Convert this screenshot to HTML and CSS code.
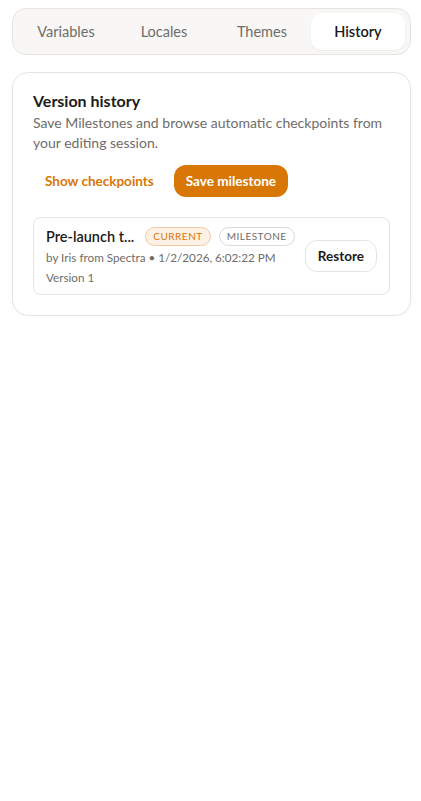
FILE: index.html
```html
<!DOCTYPE html>
<html lang="en">
<head>
  <meta charset="UTF-8">
  <title>Version history</title>
  <link rel="stylesheet" href="styles.css">
</head>
<body>

  <nav class="tabs">
    <button class="tab">Variables</button>
    <button class="tab">Locales</button>
    <button class="tab">Themes</button>
    <button class="tab active">History</button>
  </nav>

  <section class="card">
    <h2 class="card-title">Version history</h2>
    <p class="card-desc">Save Milestones and browse automatic checkpoints from your editing session.</p>

    <div class="actions">
      <button class="btn-link">Show checkpoints</button>
      <button class="btn-primary">Save milestone</button>
    </div>

    <div class="version">
      <div class="version-info">
        <div class="version-head">
          <span class="version-name">Pre-launch t...</span>
          <span class="badge badge-current">CURRENT</span>
          <span class="badge">MILESTONE</span>
        </div>
        <div class="version-meta">by Iris from Spectra • 1/2/2026, 6:02:22 PM</div>
        <div class="version-meta">Version 1</div>
      </div>
      <button class="btn-outline">Restore</button>
    </div>
  </section>

</body>
</html>
```

FILE: styles.css
```css
:root {
  --orange: #d97706;
  --border: #e6e4e1;
  --muted: #6f6c69;
}

body {
  margin: 0;
  padding: 8px 10px 0 12px;
  font-family: 'Lato', 'Open Sans', sans-serif;
  color: #1c1a18;
  background: #fff;
}

button {
  font-family: inherit;
  cursor: pointer;
}

.tabs {
  display: grid;
  grid-template-columns: 1fr 1fr 1fr 0.96fr;
  padding: 4px 5px 4px 4px;
  height: 47px;
  box-sizing: border-box;
  background: #f8f7f5;
  border: 1px solid var(--border);
  border-radius: 14px;
}

.tab {
  border: none;
  background: none;
  font-size: 14.5px;
  color: #6f6c69;
  border-radius: 11px;
}

.tab.active {
  background: #fff;
  color: #1c1a18;
  font-weight: 600;
  box-shadow: 0 1px 2px rgba(0, 0, 0, 0.04);
}

.card {
  margin-top: 17px;
  padding: 18px 20px 20px 20px;
  border: 1px solid var(--border);
  border-radius: 16px;
  box-shadow: 0 1px 3px rgba(0, 0, 0, 0.04);
}

.card-title {
  margin: 0;
  font-size: 16px;
  font-weight: 700;
  line-height: 20px;
}

.card-desc {
  margin: 2px 0 0;
  font-size: 14px;
  line-height: 20px;
  color: var(--muted);
}

.actions {
  display: flex;
  gap: 8px;
  margin-top: 12px;
}

.btn-link {
  border: none;
  background: none;
  color: var(--orange);
  font-size: 13.5px;
  font-weight: 700;
  padding: 0 12px;
  height: 32px;
}

.btn-primary {
  border: none;
  background: var(--orange);
  color: #fff;
  font-size: 13.5px;
  font-weight: 700;
  padding: 0 12px;
  height: 32px;
  border-radius: 12px;
}

.version {
  display: flex;
  align-items: center;
  justify-content: space-between;
  margin-top: 20px;
  padding: 9px 12px 7px 12px;
  border: 1px solid var(--border);
  border-radius: 8px;
}

.version-head {
  display: flex;
  align-items: center;
  gap: 8px;
}

.version-name {
  font-size: 14.5px;
  font-weight: 600;
  margin-right: 3px;
}

.badge {
  font-size: 10px;
  letter-spacing: 0.5px;
  color: #6f6c69;
  border: 1px solid #dcdad7;
  border-radius: 10px;
  padding: 2px 7px;
  line-height: 13px;
}

.badge-current {
  color: var(--orange);
  background: #fdf1e6;
  border-color: #f1c9a3;
}

.version-meta {
  font-size: 11.7px;
  color: var(--muted);
  line-height: 20px;
}

.version-meta:nth-child(2) {
  margin-top: 1px;
}

.btn-outline {
  background: #fff;
  border: 1px solid var(--border);
  border-radius: 12px;
  height: 32px;
  padding: 0 12px;
  font-size: 13.5px;
  font-weight: 700;
  color: #1c1a18;
  margin-bottom: 2px;
}
```
